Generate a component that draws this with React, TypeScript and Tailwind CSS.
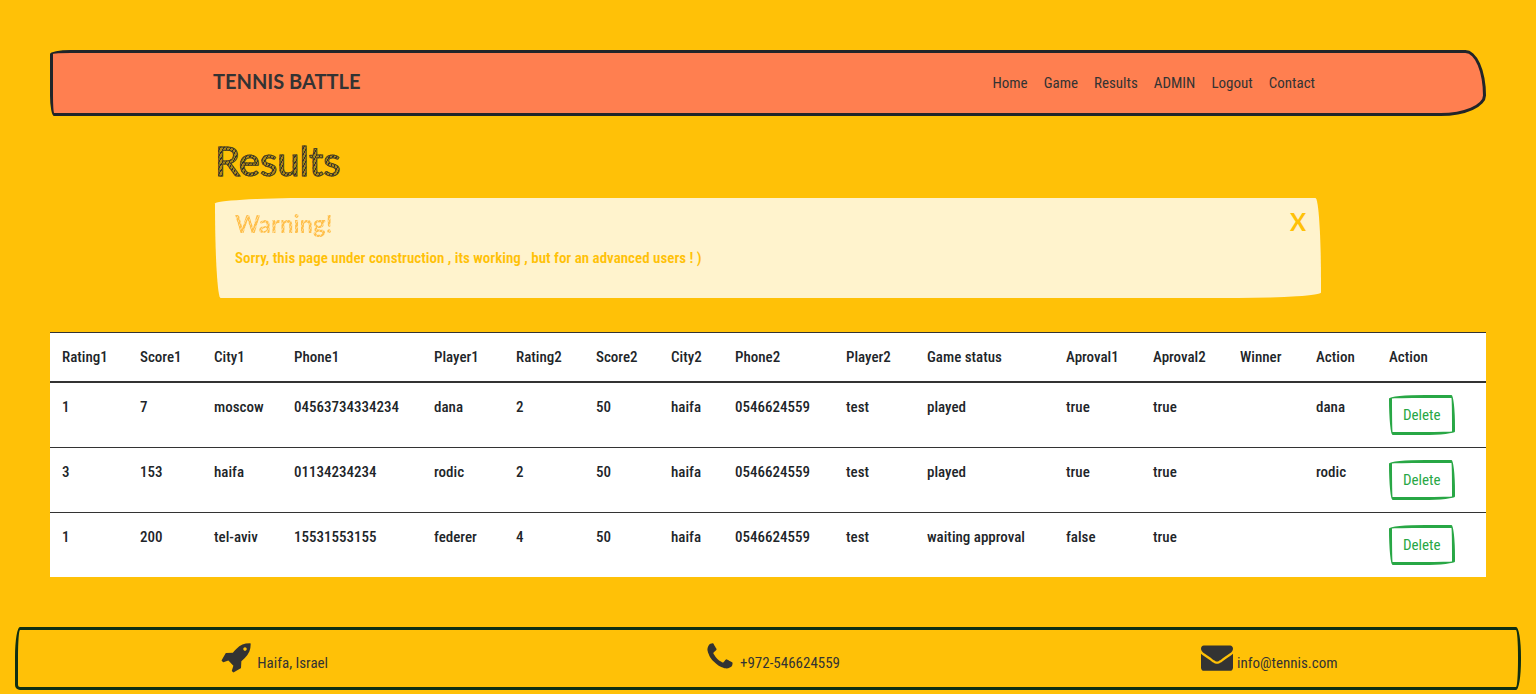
import type { ReactNode } from 'react';

const navLinks = ['Home', 'Game', 'Results', 'ADMIN', 'Logout', 'Contact'];

const columns = [
  { label: 'Rating1', width: 'w-[78px]' },
  { label: 'Score1', width: 'w-[74px]' },
  { label: 'City1', width: 'w-[80px]' },
  { label: 'Phone1', width: 'w-[140px]' },
  { label: 'Player1', width: 'w-[82px]' },
  { label: 'Rating2', width: 'w-[80px]' },
  { label: 'Score2', width: 'w-[75px]' },
  { label: 'City2', width: 'w-[64px]' },
  { label: 'Phone2', width: 'w-[111px]' },
  { label: 'Player2', width: 'w-[81px]' },
  { label: 'Game status', width: 'w-[139px]' },
  { label: 'Aproval1', width: 'w-[87px]' },
  { label: 'Aproval2', width: 'w-[87px]' },
  { label: 'Winner', width: 'w-[76px]' },
  { label: 'Action', width: 'w-[73px]' },
  { label: 'Action', width: 'w-[109px]' },
];

const games = [
  ['1', '7', 'moscow', '04563734334234', 'dana', '2', '50', 'haifa', '0546624559', 'test', 'played', 'true', 'true', '', 'dana'],
  ['3', '153', 'haifa', '01134234234', 'rodic', '2', '50', 'haifa', '0546624559', 'test', 'played', 'true', 'true', '', 'rodic'],
  ['1', '200', 'tel-aviv', '15531553155', 'federer', '4', '50', 'haifa', '0546624559', 'test', 'waiting approval', 'false', 'true', '', ''],
];

const rocket =
  'M1440 448q0-40-28-68t-68-28-68 28-28 68 28 68 68 28 68-28 28-68zm224-288q0 249-75.5 430.5t-253.5 360.5q-81 80-195 176l-20 379q-2 16-16 26l-384 224q-7 4-16 4-12 0-23-9l-64-64q-13-14-8-32l85-276-281-281-276 85q-3 1-9 1-14 0-23-9l-64-64q-17-19-5-39l224-384q10-14 26-16l379-20q96-114 176-195 188-187 358-258t431-71q14 0 24 9.5t10 22.5z';
const phone =
  'M1600 1240q0 27-10 70.5t-21 68.5q-21 50-122 106-94 51-186 51-27 0-53-3.5t-57.5-12.5-47-14.5-55.5-20.5-49-18q-98-35-175-83-127-79-264-216t-216-264q-48-77-83-175-3-9-18-49t-20.5-55.5-14.5-47-12.5-57.5-3.5-53q0-92 51-186 56-101 106-122 25-11 68.5-21t70.5-10q14 0 21 3 18 6 53 76 11 19 30 54t35 63.5 31 53.5q3 4 17.5 25t21.5 35.5 7 28.5q0 20-28.5 50t-62 55-62 53-28.5 46q0 9 5 22.5t8.5 20.5 14 24 11.5 19q76 137 174 235t235 174q2 1 19 11.5t24 14 20.5 8.5 22.5 5q18 0 46-28.5t53-62 55-62 50-28.5q14 0 28.5 7t35.5 21.5 25 17.5q25 15 53.5 31t63.5 35 54 30q70 35 76 53 3 7 3 21z';
const envelope =
  'M1792 710v794q0 66-47 113t-113 47h-1472q-66 0-113-47t-47-113v-794q44 49 101 87 362 246 497 345 57 42 92.5 65.5t94.5 48 110 24.5h2q51 0 110-24.5t94.5-48 92.5-65.5q170-123 498-345 57-39 100-87zm0-294q0 79-49 151t-122 123q-376 261-468 325-10 7-42.5 31t-54 38.5-52 32.5-57.5 27-50 9h-2q-23 0-50-9t-57.5-27-52-32.5-54-38.5-42.5-31q-91-64-262-182.5t-205-142.5q-62-42-117-115.5t-55-136.5q0-78 41.5-130t118.5-52h1472q65 0 112.5 47t47.5 113z';

function FooterItem({ path, children }: { path: string; children: ReactNode }) {
  return (
    <li className="flex items-start justify-center gap-1">
      <svg viewBox="0 0 1792 1792" className="size-8 fill-[#333]" aria-hidden="true">
        <path d={path} />
      </svg>
      <span className="pt-[10px]">{children}</span>
    </li>
  );
}

export default function App() {
  return (
    <div className='min-h-screen bg-[#ffc107] font-["Roboto_Condensed","Open_Sans",sans-serif] text-[15px] leading-6 font-medium text-[#212529]'>
      <div className="px-[50px] pt-[50px]">
        <header className="rounded-[25px_25px_55px_5px/5px_55px_25px_25px] border-[3px] border-[#212529] bg-[#ff7f50] py-[13px] text-[#333]">
          <div className="mx-auto flex max-w-[1110px] items-center justify-between pr-2">
            <a href="#home" className='pb-1 font-["Lato",sans-serif] text-[20px] leading-[30px] font-bold'>TENNIS BATTLE</a>
            <nav className="flex gap-4 font-normal">
              {navLinks.map((link) => (
                <a key={link} href={`#${link.toLowerCase()}`}>{link}</a>
              ))}
            </nav>
          </div>
        </header>

        <main>
          <section className="mx-auto max-w-[1106px] pt-[22px]">
            <h1 className='mb-[14px] bg-[repeating-linear-gradient(120deg,#333_0_1px,#b08a14_1px_3px)] bg-clip-text font-["Lato",sans-serif] text-[40px] leading-[46px] font-normal text-transparent [-webkit-text-stroke:1px_#4a4020]'>
              Results
            </h1>
            <div role="alert" className="mb-[34px] flex justify-between rounded-[255px_15px_225px_15px/15px_225px_15px_255px] bg-[#fff3cd] pt-3 pr-[11px] pb-[26px] pl-5 text-[#ffc107]">
              <div>
                <h2 className='mb-1.5 bg-[repeating-linear-gradient(120deg,#ffc04d_0_2px,#ffd78a_2px_3px)] bg-clip-text font-["Lato",sans-serif] text-[24px] leading-7 font-bold text-transparent'>
                  Warning!
                </h2>
                <p className="leading-7 font-semibold">Sorry, this page under construction , its working , but for an advanced users ! )</p>
              </div>
              <button type="button" aria-label="Close" className='self-start px-1 font-["Lato",sans-serif] text-[24px] leading-6 font-bold'>
                X
              </button>
            </div>
          </section>

          <table className="w-full table-fixed border-collapse bg-white text-left">
            <colgroup>
              {columns.map((column, i) => (
                <col key={i} className={column.width} />
              ))}
            </colgroup>
            <thead>
              <tr className="border-t border-b-2 border-[#333]">
                {columns.map((column, i) => (
                  <th key={i} scope="col" className="p-3 font-medium whitespace-nowrap">{column.label}</th>
                ))}
              </tr>
            </thead>
            <tbody className="divide-y divide-[#333]">
              {games.map((game, row) => (
                <tr key={row}>
                  {game.map((value, i) => (
                    <td key={i} className="p-3 align-top whitespace-nowrap">{value}</td>
                  ))}
                  <td className="p-3">
                    <button type="button" className="block rounded-[255px_25px_225px_25px/25px_225px_25px_255px] border-[3px] border-[#28a745] px-[11px] py-[5px] font-normal text-[#28a745]">
                      Delete
                    </button>
                  </td>
                </tr>
              ))}
            </tbody>
          </table>
        </main>
      </div>

      <footer className="mx-[15px] mt-[50px] rounded-[5px_5px_5px_5px/30px_30px_30px_5px] border-[3px] border-[#0f2f14] pt-[11px] pb-3 pl-2 font-normal text-[#333]">
        <ul className="grid grid-cols-3">
          <FooterItem path={rocket}>Haifa, Israel</FooterItem>
          <FooterItem path={phone}>+972-546624559</FooterItem>
          <FooterItem path={envelope}>info@tennis.com</FooterItem>
        </ul>
      </footer>
    </div>
  );
}
